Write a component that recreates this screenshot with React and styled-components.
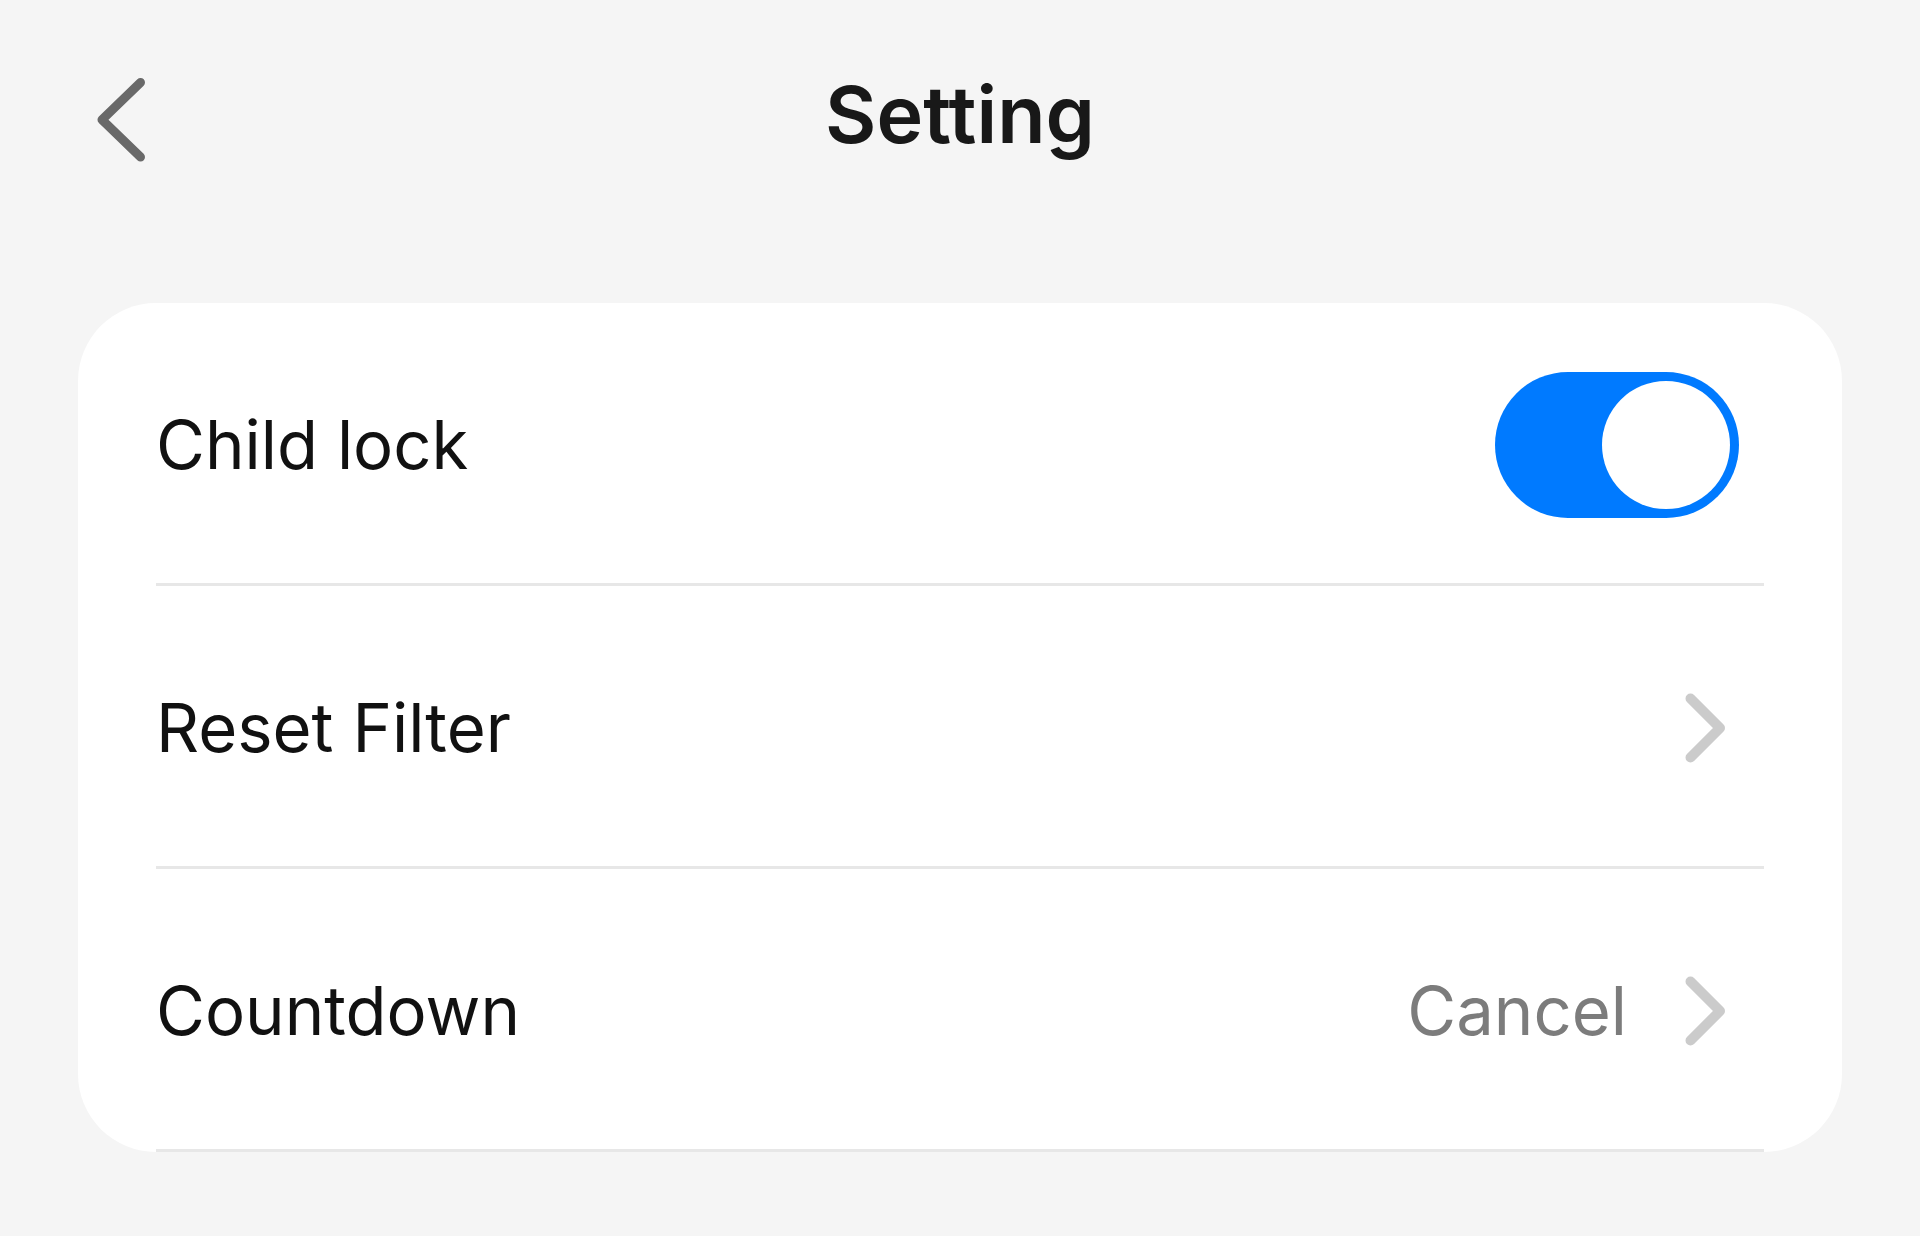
import React, { useState } from "react";
import styled, { createGlobalStyle } from "styled-components";

const GlobalStyle = createGlobalStyle`
  * { box-sizing: border-box; }
  body {
    margin: 0;
    background: #f5f5f5;
    color: #111111;
    font-family: Inter, "Liberation Sans", Arial, sans-serif;
  }
`;

const Page = styled.div`
  min-height: 100vh;
  padding: 78px;
`;

const Header = styled.header`
  display: grid;
  grid-template-columns: 84px 1fr 84px;
  align-items: start;
  margin-bottom: 141px;
`;

const BackButton = styled.button`
  display: flex;
  padding: 0;
  border: 0;
  background: none;
  cursor: pointer;
`;

const Title = styled.h1`
  margin: 0;
  font-size: 79px;
  font-weight: 600;
  line-height: 72px;
  text-align: center;
  color: #181818;
`;

const Card = styled.main`
  padding: 0 78px;
  border-radius: 78px;
  background: #ffffff;
`;

const Row = styled.div`
  display: flex;
  align-items: center;
  gap: 40px;
  width: 100%;
  height: 283px;
  padding: 0 25px 0 0;
  border: 0;
  background: none;
  box-shadow: inset 0 -3px #e7e7e7;
  font-family: inherit;
  font-size: 67px;
  font-weight: 400;
  line-height: 82px;
  text-align: left;
  color: inherit;
  cursor: pointer;
`;

const Label = styled.span`
  flex: 1;
`;

const Value = styled.span`
  color: #7c7c7c;
`;

const Switch = styled.input`
  appearance: none;
  display: flex;
  align-items: center;
  justify-content: ${(p) => (p.checked ? "flex-end" : "flex-start")};
  width: 244px;
  height: 146px;
  margin: 0;
  padding: 9px;
  border-radius: 73px;
  background: ${(p) => (p.checked ? "#007aff" : "#cccccc")};
  cursor: pointer;

  &::before {
    content: "";
    width: 128px;
    height: 128px;
    border-radius: 50%;
    background: #ffffff;
  }
`;

const BackIcon = () => (
  <svg width="84" height="84" viewBox="0 0 84 84" fill="none" aria-hidden="true">
    <path d="M62.5 4.5L24 41.7L62.5 79" stroke="#696969" strokeWidth="9" strokeLinecap="round" strokeLinejoin="round" />
  </svg>
);

const Chevron = () => (
  <svg width="72" height="72" viewBox="0 0 72 72" fill="none" aria-hidden="true">
    <path d="M23.5 6.5L53 36L23.5 65.5" stroke="#cbcbcb" strokeWidth="10" strokeLinecap="round" strokeLinejoin="round" />
  </svg>
);

const LinkRow = ({ label, value }) => (
  <Row as="button" type="button">
    <Label>{label}</Label>
    {value && <Value>{value}</Value>}
    <Chevron />
  </Row>
);

export default function App() {
  const [locked, setLocked] = useState(true);
  return (
    <>
      <GlobalStyle />
      <Page>
        <Header>
          <BackButton type="button" aria-label="Back">
            <BackIcon />
          </BackButton>
          <Title>Setting</Title>
        </Header>
        <Card>
          <Row as="label" htmlFor="child-lock">
            <Label>Child lock</Label>
            <Switch
              id="child-lock"
              type="checkbox"
              role="switch"
              checked={locked}
              onChange={(e) => setLocked(e.target.checked)}
            />
          </Row>
          <LinkRow label="Reset Filter" />
          <LinkRow label="Countdown" value="Cancel" />
        </Card>
      </Page>
    </>
  );
}
